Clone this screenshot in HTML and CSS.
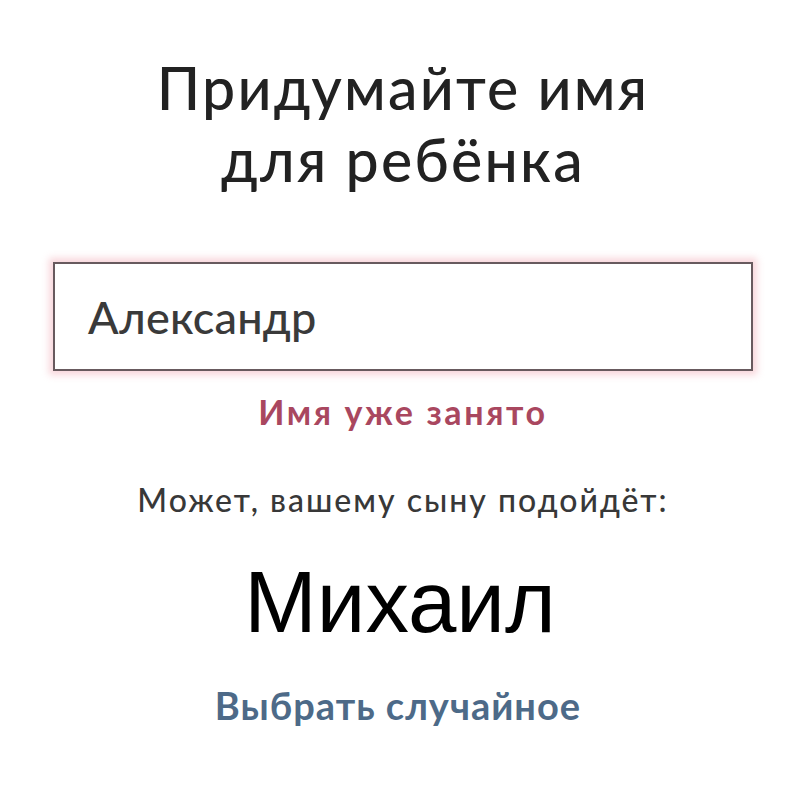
FILE: index.html
```html
<!DOCTYPE html>
<html lang="ru">
<head>
    <meta charset="UTF-8">
    <meta name="viewport" content="width=device-width, initial-scale=1.0">
    <title>Имя для ребёнка</title>
    <link rel="stylesheet" href="styles.css">
</head>
<body>
    <main class="name-form">
        <h1 class="title">Придумайте имя<br>для ребёнка</h1>

        <div class="field">
            <span class="field-value">Александр</span>
        </div>

        <p class="error">Имя уже занято</p>
        <p class="hint">Может, вашему сыну подойдёт:</p>
        <p class="suggestion">Михаил</p>

        <a class="random-link" href="#">Выбрать случайное</a>
    </main>
</body>
</html>
```

FILE: styles.css
```css
/* Общие стили */
body {
    margin: 0;
    background: #ffffff;
    font-family: 'Lato', 'Open Sans', sans-serif;
    color: #2b2b2b;
}

.name-form {
    display: flex;
    flex-direction: column;
    align-items: center;
    padding: 52px 0 0 6px;
}

/* Заголовок */
.title {
    margin: 0;
    font-size: 59px;
    line-height: 72px;
    font-weight: 500;
    letter-spacing: 2.2px;
    text-align: center;
    color: #222222;
}

/* Поле ввода */
.field {
    box-sizing: border-box;
    width: 700px;
    height: 109px;
    margin-top: 66px;
    padding: 0 33px;
    display: flex;
    align-items: center;
    border: 2px solid #685a5e;
    box-shadow: 0 0 7px 4px rgba(240, 165, 175, 0.45);
}

.field-value {
    font-size: 45px;
    font-weight: 500;
    letter-spacing: 0.2px;
    color: #3a3a3a;
}

/* Сообщения */
.error {
    margin: 20px 0 0;
    font-size: 34px;
    font-weight: 700;
    letter-spacing: 2.6px;
    color: #a9475f;
}

.hint {
    margin: 48px 0 0;
    font-size: 32px;
    font-weight: 500;
    letter-spacing: 2px;
    color: #383838;
}

.suggestion {
    margin: 39px 0 0 -6px;
    font-family: 'Liberation Sans', Arial, sans-serif;
    font-size: 87px;
    line-height: 1;
    color: #000000;
}

.random-link {
    margin: 37px 10px 0 0;
    font-size: 38px;
    font-weight: 700;
    letter-spacing: 1px;
    color: #4d6a88;
    text-decoration: none;
}
```
